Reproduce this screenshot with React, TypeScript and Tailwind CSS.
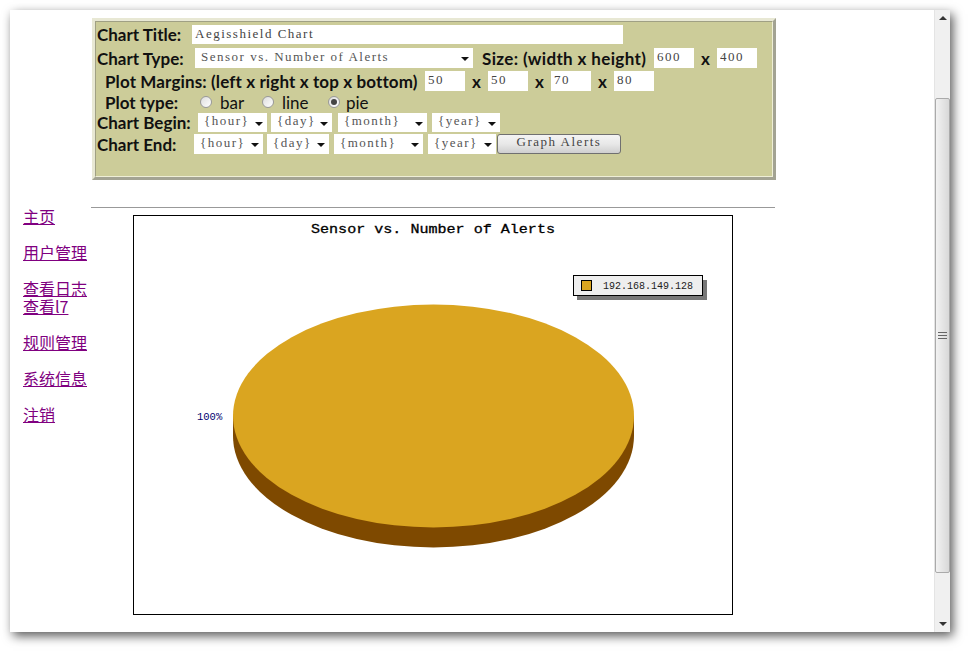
import React from "react";

const inputFont = "font-['Liberation_Serif',serif] text-[13px] tracking-[1.5px] text-[#444]";
const labelFont = "font-['Lato','Noto_Sans',sans-serif] font-bold text-[17px] leading-none text-[#111] whitespace-nowrap";

const Field = ({ value, className }: { value: string; className: string }) => (
  <input
    readOnly
    value={value}
    className={`h-full bg-white pl-[3px] outline-none ${inputFont} ${className}`}
  />
);

const Select = ({ value, className }: { value: string; className: string }) => (
  <div className={`h-full bg-white flex items-center justify-between pl-[6px] pr-[4px] ${inputFont} text-[#555] ${className}`}>
    <span className="whitespace-nowrap pb-[3px]">{value}</span>
    <svg width="8" height="4" viewBox="0 0 8 4" className="mt-[2px]">
      <path d="M0 0h8L4 4z" fill="#111" />
    </svg>
  </div>
);

const X = () => <span className={`${labelFont} w-[23px] text-center`}>x</span>;

const Radio = ({ checked }: { checked?: boolean }) => (
  <span className="w-[12px] h-[12px] rounded-full border border-[#999] bg-gradient-to-br from-[#ddd] to-white flex items-center justify-center">
    {checked && <span className="w-[6px] h-[6px] rounded-full bg-[#444]" />}
  </span>
);

const DateSelects = ({ widths }: { widths: string[] }) => (
  <>
    <Select value="{hour}" className={widths[0]} />
    <Select value="{day}" className={widths[1]} />
    <Select value="{month}" className={widths[2]} />
    <Select value="{year}" className={widths[3]} />
  </>
);

const ChartForm = () => (
  <div className="ml-[82px] w-[684px] h-[162px] mt-[8px] border-[3px] border-t-[#e8e8d4] border-l-[#e8e8d4] border-r-[#a3a393] border-b-[#a3a393]">
    <div className="h-full border border-t-[#a0a084] border-l-[#a0a084] border-r-[#eeeed6] border-b-[#eeeed6] bg-[#cccc99] pl-[1px] pt-[3px] flex flex-col">
      <div className="flex items-center h-[19px]">
        <span className={`${labelFont} w-[95px]`}>Chart Title:</span>
        <Field value="Aegisshield Chart" className="w-[431px] pb-[1px]" />
      </div>
      <div className="flex items-center h-[20px] mt-[4px]">
        <span className={`${labelFont} w-[98px]`}>Chart Type:</span>
        <Select value="Sensor vs. Number of Alerts" className="w-[278px] pl-[5px]" />
        <span className={`${labelFont} tracking-[0.36px] ml-[9px] w-[172px]`}>Size: (width x height)</span>
        <Field value="600" className="w-[40px] pb-[3px]" />
        <X />
        <Field value="400" className="w-[40px] pb-[3px]" />
      </div>
      <div className="flex items-center h-[20px] mt-[3px] pl-[8px]">
        <span className={`${labelFont} tracking-[0.12px] w-[320px]`}>Plot Margins: (left x right x top x bottom)</span>
        <Field value="50" className="w-[40px] pb-[3px]" />
        <X />
        <Field value="50" className="w-[40px] pb-[3px]" />
        <X />
        <Field value="70" className="w-[40px] pb-[3px]" />
        <X />
        <Field value="80" className="w-[40px] pb-[3px]" />
      </div>
      <div className="flex items-center h-[18px] mt-[2px] mb-[1px] pl-[8px]">
        <span className={`${labelFont} w-[95px]`}>Plot type:</span>
        <Radio />
        <span className={`${labelFont} font-normal ml-[8px] w-[42px]`}>bar</span>
        <Radio />
        <span className={`${labelFont} font-normal ml-[8px] w-[46px]`}>line</span>
        <Radio checked />
        <span className={`${labelFont} font-normal ml-[6px]`}>pie</span>
      </div>
      <div className="flex items-center h-[19px] mt-[1px] gap-[4px]">
        <span className={`${labelFont} w-[97px]`}>Chart Begin:</span>
        <DateSelects widths={["w-[69px]", "w-[61px] ml-[0px]", "w-[89px] ml-[2px]", "w-[68px] ml-[1px]"]} />
      </div>
      <div className="flex items-center h-[20px] mt-[2px]">
        <span className={`${labelFont} w-[97px]`}>Chart End:</span>
        <DateSelects widths={["w-[69px]", "w-[62px] ml-[4px]", "w-[89px] ml-[5px]", "w-[68px] ml-[5px]"]} />
        <button className={`ml-[1px] w-[124px] h-[20px] rounded-[3px] border border-[#707070] bg-gradient-to-b from-[#f4f4f4] via-[#e8e8e8] to-[#cfcfcf] flex items-center justify-center ${inputFont} text-[#444]`}>
          <span className="pb-[4px]">Graph Alerts</span>
        </button>
      </div>
    </div>
  </div>
);

const NavLink = ({ children }: { children: React.ReactNode }) => (
  <a className="block text-[#800080] underline text-[16px] leading-[18px] font-['Noto_Sans_CJK_SC','Lato',sans-serif]">
    {children}
  </a>
);

const Nav = () => (
  <nav className="w-[123px] pl-[13px] -mt-[1px] flex flex-col gap-[18px]">
    <NavLink>主页</NavLink>
    <NavLink>用户管理</NavLink>
    <div>
      <NavLink>查看日志</NavLink>
      <NavLink>查看l7</NavLink>
    </div>
    <NavLink>规则管理</NavLink>
    <NavLink>系统信息</NavLink>
    <NavLink>注销</NavLink>
  </nav>
);

const Chart = () => (
  <svg width="600" height="400" viewBox="0 0 600 400" className="mt-[7px] shrink-0">
    <rect x="0.5" y="0.5" width="599" height="399" fill="#fff" stroke="#000" />
    <text x="178" y="18" textLength="244" lengthAdjust="spacingAndGlyphs" fontFamily="Liberation Mono, monospace" fontSize="13.5" fill="#000" stroke="#000" strokeWidth="0.3">
      Sensor vs. Number of Alerts
    </text>
    <rect x="444" y="65" width="130" height="20" fill="#777" />
    <rect x="440.5" y="60.5" width="129" height="20" fill="#eee" stroke="#000" />
    <rect x="448.5" y="65.5" width="10" height="10" fill="#daa520" stroke="#000" />
    <text x="470" y="74" fontFamily="Liberation Mono, monospace" fontSize="10" fill="#222">
      192.168.149.128
    </text>
    <path d="M100 201v20a200.5 111.5 0 0 0 401 0v-20z" fill="#7e4900" />
    <ellipse cx="300.5" cy="201" rx="200.5" ry="111.5" fill="#daa520" />
    <text x="64" y="205" fontFamily="Liberation Mono, monospace" fontSize="10.5" fill="#000070">
      100%
    </text>
  </svg>
);

const Scrollbar = () => (
  <div className="w-[16px] h-full bg-[#f0f0f0] flex flex-col items-center border-l border-[#e4e4e4]">
    <div className="h-[88px] w-full pt-[6px] flex justify-center">
      <svg width="8" height="4" viewBox="0 0 8 4">
        <path d="M0 4h8L4 0z" fill="#333" />
      </svg>
    </div>
    <div className="h-[475px] w-[15px] rounded-[2px] border border-[#aaa] bg-gradient-to-r from-[#f2f2f2] to-[#d8d8d8] flex flex-col items-center justify-center gap-[2px]">
      <span className="w-[9px] h-[1px] bg-[#666]" />
      <span className="w-[9px] h-[1px] bg-[#666]" />
      <span className="w-[9px] h-[1px] bg-[#666]" />
    </div>
    <div className="flex-1 w-full flex items-end justify-center pb-[6px]">
      <svg width="8" height="4" viewBox="0 0 8 4">
        <path d="M0 0h8L4 4z" fill="#333" />
      </svg>
    </div>
  </div>
);

export default function App() {
  return (
    <div className="w-[968px] h-[651px] bg-white pt-[10px] pl-[10px] overflow-hidden">
      <div className="w-[940px] h-[622px] bg-white flex overflow-hidden shadow-[3px_4px_10px_rgba(0,0,0,0.65)]">
        <div className="flex-1 min-w-0">
          <ChartForm />
          <hr className="ml-[81px] w-[684px] mt-[27px] border-0 h-[1px] bg-[#999]" />
          <div className="flex">
            <Nav />
            <Chart />
          </div>
        </div>
        <Scrollbar />
      </div>
    </div>
  );
}
